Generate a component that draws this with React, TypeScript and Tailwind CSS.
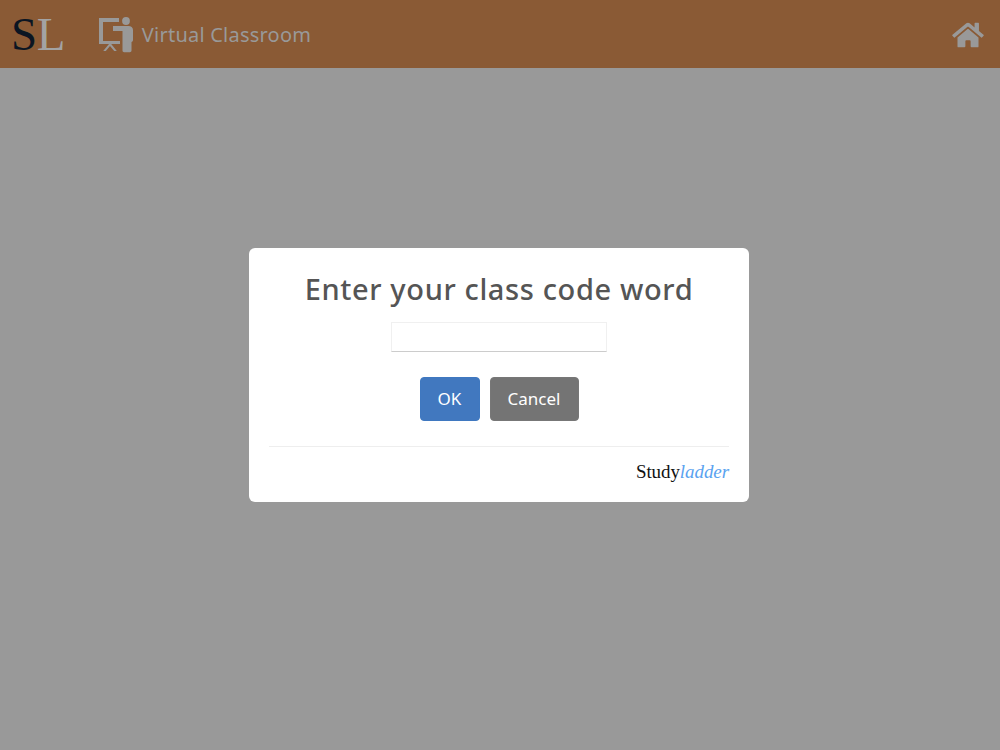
import { FaHome } from "react-icons/fa";

export default function App() {
  return (
    <div className="relative h-[750px] w-full overflow-hidden bg-[#999999] font-['Noto_Sans',sans-serif]">
      <header className="flex h-[68px] items-center bg-[#8a5a35] pl-[11px] pr-[16px]">
        <div className="flex items-baseline font-['Liberation_Serif',serif] text-[47px] leading-none tracking-[-0.5px]">
          <span className="text-[#0b1522]">S</span>
          <span className="text-[#a3a3a3]">L</span>
        </div>
        <svg viewBox="0 0 36 36" className="ml-[33px] mt-[2px] h-[36px] w-[36px]" fill="#999999">
          <path d="M1 1h20v4H5v19h17v3H1z" />
          <circle cx="28" cy="4" r="3.9" />
          <path d="M15 9h15.500c2.500 0 4.500 1.500 4.500 4v10c0 1.200-.6 1.800-1.500 1.900V33.500c0 1-.8 1.700-1.700 1.700h-5.600c-1 0-1.700-.7-1.700-1.700V14H15z" />
          <path d="M11 27h2.200l5.600 7h-2.600L12 29l-4.200 5H5.200z" />
        </svg>
        <span className="ml-[8px] mt-[2px] text-[20px] tracking-[0.22px] text-[#999999]">Virtual Classroom</span>
        <FaHome className="ml-auto mt-[1px] h-[28px] w-[32px] text-[#999999]" />
      </header>
      <div className="absolute inset-0 flex items-center justify-center pr-[2px]">
        <div className="flex h-[254px] w-[500px] flex-col items-center rounded-[6px] bg-white px-[20px]">
          <h1 className="mt-[22px] text-[29px] font-medium leading-[38px] tracking-[0.63px] text-[#555555]">Enter your class code word</h1>
          <input className="mt-[14px] h-[30px] w-[216px] border border-[#f0f0f0] border-b-[#cccccc] bg-white outline-none" />
          <div className="mt-[25px] flex gap-[10px]">
            <button className="h-[44px] w-[60px] rounded-[4px] border border-[#3f78c0] bg-[#4178bf] text-[17px] text-white">OK</button>
            <button className="h-[44px] w-[89px] rounded-[4px] border border-[#777777] bg-[#747474] text-[17px] text-white">Cancel</button>
          </div>
          <div className="mt-[25px] w-full border-t border-[#eeeeee] pt-[13px] text-right font-['Liberation_Serif',serif] text-[19px] leading-[23px] tracking-[-0.08px]">
            <span className="text-[#111111]">Study</span>
            <span className="italic text-[#5aa2f0]">ladder</span>
          </div>
        </div>
      </div>
    </div>
  );
}
